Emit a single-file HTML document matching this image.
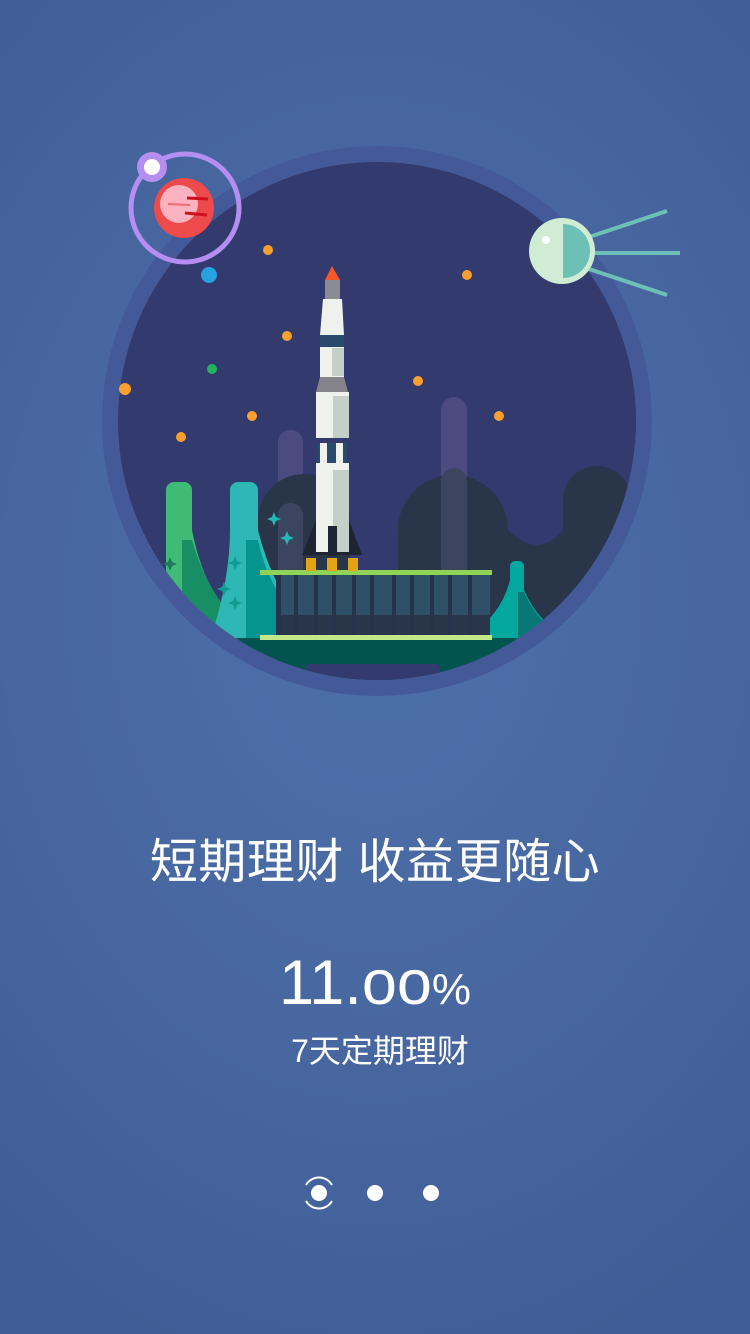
<!DOCTYPE html>
<html><head><meta charset="utf-8"><style>
html,body{margin:0;padding:0}
body{width:750px;height:1334px;overflow:hidden;background:radial-gradient(ellipse 600px 800px at 375px 600px,#4e70a9 0%,#4766a0 60%,#3f5d96 100%);position:relative;font-family:"Liberation Sans","Noto Sans CJK SC",sans-serif;color:#fff}
.t1{position:absolute;top:822px;left:0;width:750px;text-align:center;font-size:48px;letter-spacing:0.5px}
.t2{position:absolute;top:948px;left:0;width:750px;text-align:center;font-size:63px;font-family:"Liberation Sans",sans-serif;line-height:70px}
.t2 .p{font-size:44px}
.t3{position:absolute;top:1026px;left:0;width:760px;text-align:center;font-size:32px}
</style></head><body>
<svg width="750" height="760" style="position:absolute;left:0;top:0">
<defs><clipPath id="c"><circle cx="377" cy="421" r="259"/></clipPath></defs>
<circle cx="377" cy="421" r="275" fill="#445a98"/>
<circle cx="377" cy="421" r="259" fill="#323a6e"/>
<g clip-path="url(#c)">
<rect x="441" y="397" width="26" height="90" rx="13" fill="#4b4b80"/>
<rect x="278" y="430" width="25" height="80" rx="12" fill="#4b4b80"/>
<path d="M258 640 V520 a46 46 0 0 1 92 0 V640Z" fill="#293649"/>
<path d="M398 640 V530 a55 55 0 0 1 110 0 q30 30 55 0 V500 a34 34 0 0 1 68 0 V640Z" fill="#293649"/>
<rect x="441" y="468" width="26" height="170" rx="13" fill="#3c4560"/>
<rect x="278" y="503" width="25" height="130" rx="12" fill="#3c4560"/>
<path d="M166 640 V490 a8 8 0 0 1 8 -8 h10 a8 8 0 0 1 8 8 V530 q15 80 70 110Z" fill="#3fbb76"/>
<path d="M182 640 V540 h10 q20 70 70 100Z" fill="#178e63"/>
<path d="M210 640 q20-60 20-110 V490 a8 8 0 0 1 8 -8 h12 a8 8 0 0 1 8 8 V530 q20 80 70 110Z" fill="#2db8b5"/>
<path d="M246 640 V540 h12 q15 70 70 100Z" fill="#06948f"/>
<path d="M460 640 q40-20 50-60 V566 a5 5 0 0 1 5 -5 h4 a5 5 0 0 1 5 5 V590 q20 45 60 50Z" fill="#02a89e"/>
<path d="M518 640 V592 h6 q20 45 60 48Z" fill="#087877"/>
<rect x="276" y="575" width="214" height="62" fill="#2f5168"/>
<rect x="276" y="615" width="214" height="22" fill="#293649"/>
<g fill="#26334a"><rect x="276" y="575" width="5" height="62"/><rect x="294" y="575" width="4" height="62"/><rect x="314" y="575" width="4" height="62"/><rect x="332" y="575" width="4" height="62"/><rect x="352" y="575" width="4" height="62"/><rect x="370" y="575" width="4" height="62"/><rect x="392" y="575" width="4" height="62"/><rect x="410" y="575" width="4" height="62"/><rect x="430" y="575" width="4" height="62"/><rect x="448" y="575" width="4" height="62"/><rect x="468" y="575" width="4" height="62"/></g>
<rect x="100" y="638" width="560" height="100" fill="#03534e"/>
<rect x="305" y="664" width="135" height="30" rx="4" fill="#323a6e"/>
<rect x="260" y="570" width="232" height="5" fill="#8fd456"/>
<rect x="260" y="635" width="232" height="5" fill="#c2e88a"/>
<polygon points="332,266 325,280 340,280" fill="#f4582a"/>
<rect x="325" y="280" width="15" height="19" fill="#8b8c93"/>
<polygon points="323,299 342,299 344,335 320,335" fill="#eef1ec"/>
<rect x="320" y="335" width="24" height="12" fill="#2a4a6c"/>
<rect x="320" y="347" width="24" height="30" fill="#eef1ec"/><rect x="332" y="348" width="12" height="28" fill="#c4cfc7"/>
<polygon points="320,377 344,377 348,392 316,392" fill="#838389"/>
<rect x="316" y="392" width="33" height="46" fill="#eef1ec"/><rect x="333" y="396" width="16" height="42" fill="#c4cfc7"/>
<rect x="318" y="443" width="29" height="20" fill="#2a4a6c"/>
<rect x="320" y="443" width="7" height="20" fill="#eef1ec"/><rect x="336" y="443" width="7" height="20" fill="#eef1ec"/>
<polygon points="316,520 302,555 362,555 349,520" fill="#1f2433"/>
<rect x="316" y="463" width="33" height="89" fill="#eef1ec"/><rect x="333" y="470" width="16" height="82" fill="#c4cfc7"/>
<rect x="328" y="526" width="9" height="30" fill="#1f2433"/>
<g fill="#e3a315"><rect x="306" y="558" width="10" height="13"/><rect x="327" y="558" width="10" height="13"/><rect x="348" y="558" width="10" height="13"/></g>
<g fill="#22b8b5"><path d="M274 512 l2 5 5 2 -5 2 -2 5 -2 -5 -5 -2 5 -2Z"/><path d="M287 531 l2 5 5 2 -5 2 -2 5 -2 -5 -5 -2 5 -2Z"/></g>
<g fill="#1b7a5c"><path d="M170 557 l2 5 5 2 -5 2 -2 5 -2 -5 -5 -2 5 -2Z"/></g>
<g fill="#109c90"><path d="M235 556 l2 5 5 2 -5 2 -2 5 -2 -5 -5 -2 5 -2Z"/><path d="M224 582 l2 5 5 2 -5 2 -2 5 -2 -5 -5 -2 5 -2Z"/><path d="M235 596 l2 5 5 2 -5 2 -2 5 -2 -5 -5 -2 5 -2Z"/></g>
</g>
<g fill="#f9a02f"><circle cx="268" cy="250" r="5"/><circle cx="467" cy="275" r="5"/><circle cx="287" cy="336" r="5"/><circle cx="418" cy="381" r="5"/><circle cx="252" cy="416" r="5"/><circle cx="499" cy="416" r="5"/><circle cx="181" cy="437" r="5"/><circle cx="125" cy="389" r="6"/></g>
<circle cx="212" cy="369" r="5" fill="#22b35e"/>
<circle cx="209" cy="275" r="8" fill="#2aa1df"/>
<circle cx="185" cy="208" r="54" fill="none" stroke="#b48ef0" stroke-width="5"/>
<circle cx="184" cy="208" r="30" fill="#ef4a4b"/>
<circle cx="179" cy="204" r="19" fill="#fdb2c0"/>
<g stroke="#d0101e" stroke-width="3"><line x1="187" y1="198" x2="208" y2="199"/><line x1="185" y1="213" x2="207" y2="215"/></g>
<line x1="168" y1="204" x2="190" y2="205" stroke="#ee6b78" stroke-width="2"/>
<circle cx="152" cy="167" r="15" fill="#b48ef0"/><circle cx="152" cy="167" r="8" fill="#fff"/>
<g stroke="#6cc0b6" stroke-width="4"><line x1="580" y1="240" x2="667" y2="211"/><line x1="585" y1="253" x2="680" y2="253"/><line x1="580" y1="266" x2="667" y2="295"/></g>
<circle cx="562" cy="251" r="33" fill="#d1ecd4"/>
<path d="M563 224 a27 27 0 0 1 0 54Z" fill="#6cc0b6"/>
<circle cx="546" cy="240" r="4" fill="#fff"/>
</svg>
<div class="t1">短期理财 收益更随心</div>
<div class="t2">11.oo<span class="p">%</span></div>
<div class="t3">7天定期理财</div>
<svg width="750" height="60" style="position:absolute;left:0;top:1163px">
<circle cx="319" cy="30" r="8" fill="#fff"/>
<path d="M306 22 a15 15 0 0 1 26 0 M306 38 a15 15 0 0 0 26 0" fill="none" stroke="#fff" stroke-width="2"/>
<circle cx="375" cy="30" r="8" fill="#fff"/>
<circle cx="431" cy="30" r="8" fill="#fff"/>
</svg>
</body></html>
